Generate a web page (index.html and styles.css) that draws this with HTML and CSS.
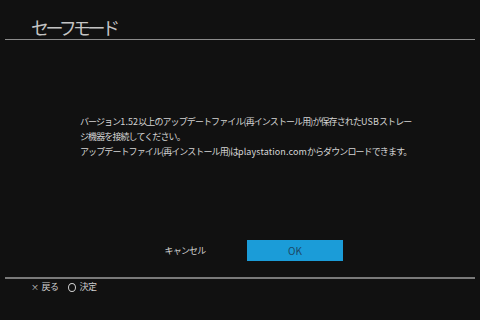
FILE: index.html
```html
<!DOCTYPE html>
<html>
<head>
    <title>セーフモード</title>
    <link rel="stylesheet" href="styles.css">
</head>
<body>
    <div class="screen">
        <div class="header">
            <h1 class="title">セーフモード</h1>
        </div>

        <div class="message">
            <p>バージョン<span class="latin">1.52</span>以上のアップデートファイル(再インストール用)が保存された<span class="latin">USB</span>ストレー<br>ジ機器を接続してください。</p>
            <p>アップデートファイル(再インストール用)は<span class="latin">playstation.com</span>からダウンロードできます。</p>
        </div>

        <div class="buttons">
            <div class="btn">キャンセル</div>
            <div class="btn btn-ok">OK</div>
        </div>

        <div class="footer">
            <span class="hint"><span class="key">×</span>戻る</span>
            <span class="hint"><span class="key key-circle"></span>決定</span>
        </div>
    </div>
</body>
</html>
```

FILE: styles.css
```css
/* Reset */
body, h1, p {
    margin: 0;
    padding: 0;
}

body {
    background-color: #111111;
    font-family: "Noto Sans CJK JP", "Noto Sans", sans-serif;
    color: #d2d2d2;
}

.screen {
    width: 480px;
    height: 320px;
    display: flex;
    flex-direction: column;
    overflow: hidden;
}

/* Titulo */
.header {
    margin: 0 5px;
    padding: 17px 0 2px 26px;
    border-bottom: 1px solid #8c8c8c;
}

.title {
    font-size: 18px;
    font-weight: normal;
    line-height: 20px;
    letter-spacing: -3.6px;
    color: #c4c4c4;
}

/* Mensagem */
.message {
    margin-top: 74px;
    padding-left: 80px;
    font-size: 9px;
    line-height: 15px;
    letter-spacing: -0.9px;
    white-space: nowrap;
    color: #d4d4d4;
}

.latin {
    letter-spacing: 0.1px;
}

/* Botoes */
.buttons {
    margin-top: 81px;
    display: flex;
    justify-content: center;
    gap: 14px;
}

.btn {
    width: 96px;
    height: 21px;
    display: flex;
    align-items: center;
    justify-content: center;
    font-size: 9px;
    letter-spacing: -0.8px;
    color: #d0d0d0;
}

.btn-ok {
    background-color: #1b9cd8;
    color: #1c4866;
    font-size: 10px;
    letter-spacing: 0;
}

/* Rodape */
.footer {
    margin: 16px 5px 0;
    padding: 1px 0 0 26px;
    border-top: 2px solid #7a7a7a;
    display: flex;
    gap: 9px;
    font-size: 9px;
    line-height: 14px;
    letter-spacing: -0.5px;
    color: #cfcfcf;
}

.hint {
    display: flex;
    align-items: center;
}

.key {
    margin-right: 3px;
    font-size: 8px;
}

.key-circle {
    width: 6px;
    height: 7px;
    border: 1px solid #cfcfcf;
    border-radius: 50%;
    margin-right: 4px;
}
```
